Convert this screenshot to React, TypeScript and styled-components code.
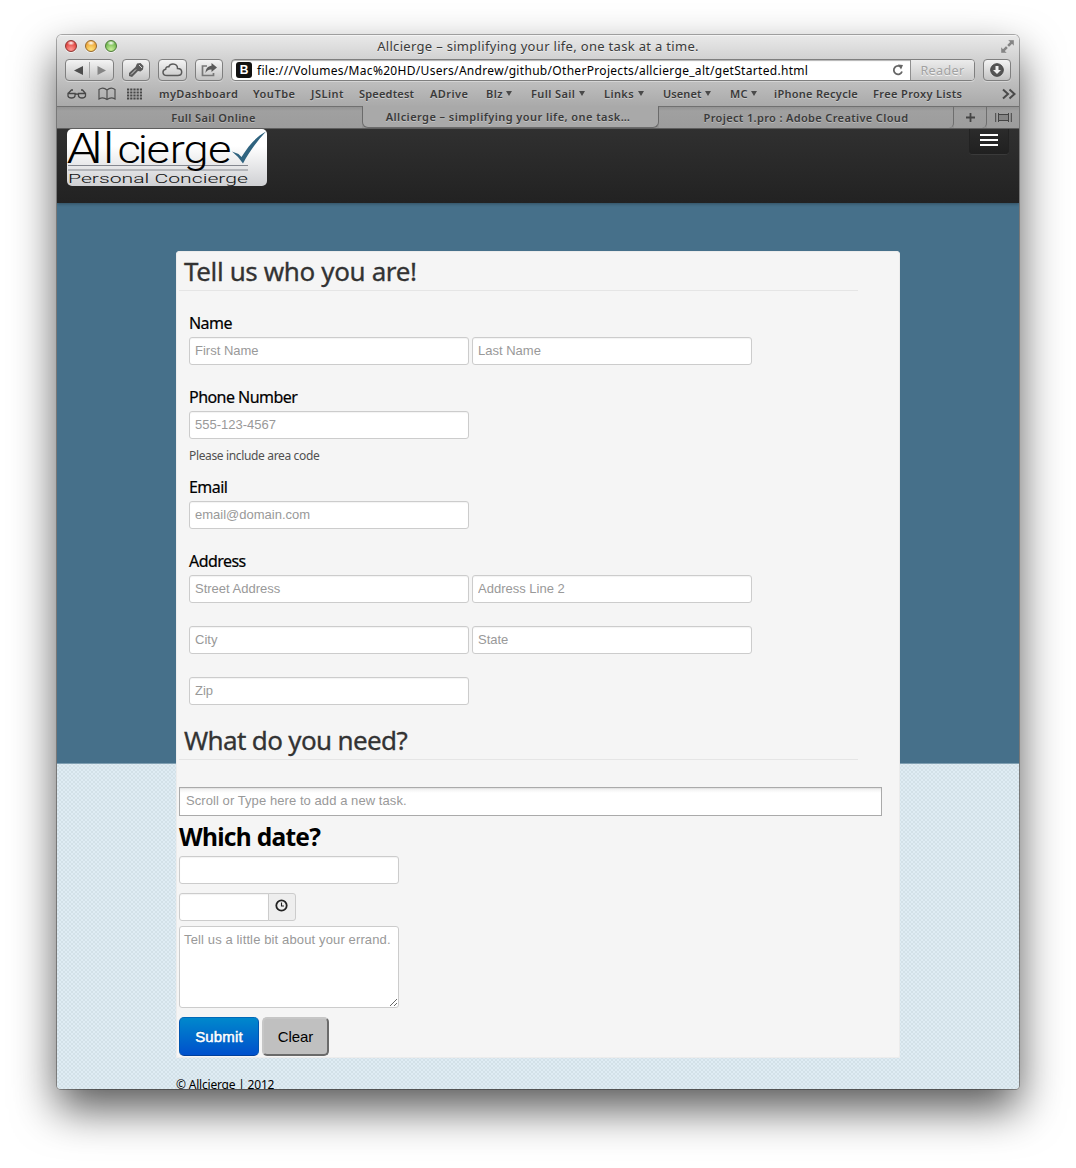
import React from "react";
import styled, { createGlobalStyle, css } from "styled-components";

const Global = createGlobalStyle`
  *, *::before, *::after { box-sizing: border-box; }
  body { margin: 0; background: #fff; }
`;

const chromeFont = `"Noto Sans", "Open Sans", sans-serif`;
const pageFont = `"Noto Sans", "Open Sans", sans-serif`;
const inputFont = `"Liberation Sans", Arial, sans-serif`;

const Desktop = styled.div`
  width: 1076px;
  height: 1168px;
  padding: 35px 57px 0 57px;
  overflow: hidden;
  background: #fff;
`;

const Window = styled.div`
  width: 962px;
  height: 1054px;
  border-radius: 5px 5px 4px 4px;
  box-shadow: 0 0 0 1px rgba(0, 0, 0, 0.3), 0 20px 44px rgba(0, 0, 0, 0.66);
  display: flex;
  flex-direction: column;
  overflow: hidden;
`;

const Chrome = styled.header`
  height: 94px;
  flex: none;
  background: linear-gradient(#e9e9e9, #d2d2d2 24px, #b3b3b3 60px, #a9a9a9 72px);
  box-shadow: inset 0 1px 0 #f4f4f4;
  font-family: ${chromeFont};
  color: #3a3a3a;
`;

const TitleBar = styled.div`
  height: 23px;
  display: grid;
  grid-template-columns: 80px 1fr 80px;
  align-items: center;
`;

const Lights = styled.div`
  display: flex;
  gap: 8px;
  padding: 0 0 1px 8px;
`;

const Light = styled.span<{ $hi: string; $mid: string; $edge: string }>`
  width: 12px;
  height: 12px;
  border-radius: 50%;
  border: 1px solid ${(p) => p.$edge};
  background: radial-gradient(ellipse 4px 2.5px at 50% 20%, #fff, transparent),
    radial-gradient(circle at 50% 85%, ${(p) => p.$hi}, ${(p) => p.$mid} 70%);
  box-shadow: 0 1px 0 rgba(255, 255, 255, 0.6);
`;

const Title = styled.div`
  text-align: center;
  font-size: 13px;
  letter-spacing: 0.31px;
  line-height: 21px;
  margin-top: -1px;
  white-space: nowrap;
  text-shadow: 0 1px 0 rgba(255, 255, 255, 0.5);
`;

const FullScreen = styled.div`
  display: flex;
  justify-content: flex-end;
  padding-right: 4px;
`;

const Toolbar = styled.div`
  height: 24px;
  display: flex;
  align-items: center;
  padding: 0 8px;
`;

const control = css`
  height: 22px;
  flex: none;
  border: 1px solid #7f7f7f;
  border-radius: 4px;
  background: linear-gradient(#f4f4f4, #c3c3c3);
  box-shadow: 0 1px 0 rgba(255, 255, 255, 0.35);
  display: flex;
  align-items: center;
  justify-content: center;
`;

const ToolButton = styled.div<{ $w: number; $gap: number }>`
  ${control}
  width: ${(p) => p.$w}px;
  margin-right: ${(p) => p.$gap}px;
`;

const AddressField = styled.div`
  ${control}
  width: 744px;
  margin-right: 8px;
  background: #fff;
  justify-content: flex-start;
  overflow: hidden;
  box-shadow: inset 0 1px 1px rgba(0, 0, 0, 0.3), 0 1px 0 rgba(255, 255, 255, 0.35);
`;

const Favicon = styled.span`
  width: 16px;
  height: 16px;
  margin: 0 5px 0 4px;
  border-radius: 3px;
  background: #111;
  color: #fff;
  font: bold 12px/16px ${inputFont};
  text-align: center;
`;

const Url = styled.span`
  width: 635px;
  color: #000;
  font-size: 12px;
  line-height: 20px;
  letter-spacing: 0.31px;
  white-space: nowrap;
  padding-top: 1px;
`;

const Reader = styled.span`
  flex: 1;
  height: 20px;
  margin-left: 6px;
  border-left: 1px solid #8f8f8f;
  background: linear-gradient(#ececec, #c9c9c9);
  color: #a2a2a2;
  font-size: 12.5px;
  line-height: 21px;
  letter-spacing: 0.4px;
  text-align: center;
  text-shadow: 0 1px 0 #f2f2f2;
`;

const Bookmarks = styled.div`
  height: 24px;
  display: flex;
  align-items: center;
  padding-left: 10px;
`;

const BookmarkIcons = styled.div`
  width: 92px;
  display: flex;
  align-items: center;
  gap: 11px;
`;

const Bookmark = styled.div<{ $w: number; $ls: number }>`
  width: ${(p) => p.$w}px;
  display: flex;
  align-items: center;
  font-size: 11px;
  font-weight: 600;
  letter-spacing: ${(p) => p.$ls}px;
  line-height: 20px;
  white-space: nowrap;
  text-shadow: 0 1px 0 rgba(255, 255, 255, 0.35);
`;

const Caret = styled.i`
  margin: -2px 0 0 3.5px;
  border: 3.5px solid transparent;
  border-top: 5px solid #4a4a4a;
  border-bottom: 0;
`;

const Tabs = styled.div`
  height: 23px;
  display: flex;
  background: #949494;
  border-bottom: 1px solid #5e5e5e;
`;

const Tab = styled.div<{ $w: number; $active?: boolean; $pad?: number; $ls?: number }>`
  width: ${(p) => p.$w}px;
  height: 22px;
  padding-left: ${(p) => p.$pad || 0}px;
  font-size: 11px;
  font-weight: 600;
  letter-spacing: ${(p) => p.$ls || 0}px;
  line-height: 20px;
  white-space: nowrap;
  display: flex;
  justify-content: center;
  align-items: center;
  text-shadow: 0 1px 0 rgba(255, 255, 255, 0.3);
  ${(p) =>
    p.$active
      ? css`
          padding: 1px 5px 0 0;
          border: solid #6b6b6b;
          border-width: 0 1px 1px;
          border-radius: 0 0 6px 6px;
          background: #a9a9a9;
        `
      : css`
          border-top: 1px solid #707070;
          background: linear-gradient(#939393, #a0a0a0 4px, #9c9c9c);
        `}
`;

const SmallTab = styled(Tab)`
  border-right: 1px solid #6e6e6e;
  border-radius: 0 0 5px 0;
`;

const Page = styled.main`
  flex: 1;
  min-height: 0;
  overflow: hidden;
  font-family: ${pageFont};
  color: #000;
  background: conic-gradient(#dfecf4 25%, #d3e1e8 0 50%, #dfecf4 0 75%, #d3e1e8 0) 0 0 / 4px 4px;
`;

const Band = styled.div`
  height: 635px;
  background: #46708a;
  border-bottom: 1px solid #7f9fb2;
`;

const Navbar = styled.nav`
  height: 74px;
  padding: 0 10px;
  display: flex;
  justify-content: space-between;
  background: linear-gradient(#303030, #222);
  box-shadow: 0 1px 3px rgba(0, 0, 0, 0.3);
`;

const MenuButton = styled.div`
  width: 40px;
  height: 25px;
  padding: 5px 0 0 11px;
  display: flex;
  flex-direction: column;
  gap: 3px;
  border-radius: 0 0 4px 4px;
  background: linear-gradient(#2b2b2b, #202020);
  box-shadow: 0 1px 0 #3a3a3a, inset 1px 0 0 #222, inset -1px 0 0 #222;
`;

const Bar = styled.span`
  width: 18px;
  height: 2px;
  background: #fff;
`;

const Sheet = styled.section`
  width: 724px;
  height: 807px;
  margin: -513px 0 0 119px;
  padding: 0 3px;
  background: #f5f5f5;
  border-radius: 4px 4px 2px 2px;
  box-shadow: inset 0 0 0 1px #ececec;
`;

const Legend = styled.h2<{ $mb: number; $ls: number }>`
  width: 679px;
  height: 40px;
  margin: 0 0 ${(p) => p.$mb}px;
  padding-left: 5px;
  border-bottom: 1px solid #e5e5e5;
  color: #333;
  font-size: 26px;
  font-weight: 400;
  letter-spacing: ${(p) => p.$ls}px;
  line-height: 40px;
  -webkit-text-stroke: 0.3px #333;
`;

const Fields = styled.div`
  height: 411px;
  padding-left: 10px;
  display: flex;
  flex-direction: column;
`;

const Group = styled.div<{ $h: number }>`
  height: ${(p) => p.$h}px;
`;

const Label = styled.label`
  display: block;
  height: 28px;
  font-size: 16px;
  letter-spacing: -0.55px;
  line-height: 28px;
  -webkit-text-stroke: 0.2px #000;
`;

const Row = styled.div`
  display: flex;
  gap: 3px;
`;

const Input = styled.input<{ $w?: number }>`
  width: ${(p) => p.$w || 280}px;
  height: 28px;
  padding: 0 5px 2px;
  border: 1px solid #ccc;
  border-radius: 3px;
  outline: 0;
  background: #fff;
  box-shadow: inset 0 1px 1px rgba(0, 0, 0, 0.05);
  font: 13px/18px ${inputFont};
  &::placeholder { color: #999; opacity: 1; }
`;

const Help = styled.p`
  margin: 0;
  color: #505050;
  font-size: 12px;
  letter-spacing: -0.35px;
  line-height: 33px;
`;

const TaskInput = styled(Input)`
  display: block;
  width: 703px;
  height: 29px;
  padding: 0 6px 2px;
  border: 1px solid #aaa;
  border-radius: 0;
  background: linear-gradient(#eee, #fff 5px);
  letter-spacing: 0.07px;
`;

const DateHeading = styled.h3`
  height: 40px;
  margin: 0;
  font-size: 24.5px;
  letter-spacing: -0.7px;
  line-height: 42px;
`;

const TimeGroup = styled.div`
  display: flex;
  margin: 9px 0 5px;
`;

const TimeInput = styled(Input)`
  border-radius: 3px 0 0 3px;
`;

const AddOn = styled.span`
  display: flex;
  align-items: flex-start;
  justify-content: center;
  width: 28px;
  height: 28px;
  margin-left: -1px;
  padding: 5px 2px 0 0;
  border: 1px solid #ccc;
  border-radius: 0 3px 3px 0;
  background: #eee;
`;

const Errand = styled.textarea`
  display: block;
  width: 220px;
  height: 82px;
  margin-bottom: 9px;
  padding: 4px;
  border: 1px solid #ccc;
  border-radius: 3px;
  resize: both;
  overflow: hidden;
  font: 13px/18px ${inputFont};
  letter-spacing: 0.13px;
  &::placeholder { color: #999; opacity: 1; }
`;

const Button = styled.button<{ $primary?: boolean }>`
  height: 39px;
  padding: 0;
  border-radius: 5px;
  font: 15px/20px ${inputFont};
  ${(p) =>
    p.$primary
      ? css`
          width: 80px;
          border: 1px solid;
          border-color: #0069b8 #0055b0 #003f9a;
          background: linear-gradient(#0088cc, #0050cc);
          color: #fff;
          letter-spacing: 0.15px;
          -webkit-text-stroke: 0.5px #fff;
          text-shadow: 0 -1px 0 rgba(0, 0, 0, 0.25);
        `
      : css`
          width: 67px;
          border: 2px solid;
          border-color: #c6c6c6 #6a6a6a #6a6a6a #c6c6c6;
          background: #c0c0c0;
          color: #000;
          letter-spacing: -0.1px;
        `}
`;

const Footer = styled.footer`
  padding: 17px 0 0 119px;
  font-size: 12px;
  letter-spacing: -0.2px;
  line-height: 20px;
`;

const Logo = () => (
  <svg width="200" height="57" viewBox="0 1 200 57">
    <defs>
      <linearGradient id="plate" x1="0" y1="0" x2="0" y2="1">
        <stop offset="0.3" stopColor="#fff" />
        <stop offset="1" stopColor="#cfd0d3" />
      </linearGradient>
    </defs>
    <rect width="200" height="57" y="1" rx="5" fill="url(#plate)" />
    <path d="M1 37.500h180" stroke="#84878f" strokeWidth="1" />
    <path d="M1 42h180" stroke="#b4b6ba" strokeWidth="2" />
    <g transform="scale(1.16 1)" fontFamily="Roboto, sans-serif" fontWeight="300">
      <text y="35">
        <tspan fontSize="43" x="-0.2 21 31">All</tspan>
        <tspan fontSize="39" x="43.500 61 68.500 88.500 100.500 121.500">cierge</tspan>
      </text>
    </g>
    <text x="1" y="54.5" fontFamily="Roboto, sans-serif" fontWeight="300" fontSize="13" textLength="180" lengthAdjust="spacingAndGlyphs" fill="#111">Personal Concierge</text>
    <path d="M165 23.500l6.500 2.500 3 3C182 17 189 9 199 3.500 190 13 182 24 176 35.500Q172 29 165 23.500z" fill="#2f637f" />
  </svg>
);

const bookmarks: [string, number, number, boolean?][] = [
  ["myDashboard", 94, 0.38],
  ["YouTbe", 58, 0.5],
  ["JSLint", 48, 0.5],
  ["Speedtest", 71, 0.2],
  ["ADrive", 56, 0.42],
  ["Blz", 45, 0.4, true],
  ["Full Sail", 73, 0.4, true],
  ["Links", 59, 0.4, true],
  ["Usenet", 67, 0.1, true],
  ["MC", 44, 0.3, true],
  ["iPhone Recycle", 99, 0.28],
  ["Free Proxy Lists", 129, 0.36],
];

export default function App() {
  return (
    <Desktop>
      <Global />
      <Window>
        <Chrome>
          <TitleBar>
            <Lights>
              <Light $hi="#ff9a94" $mid="#e0433f" $edge="#8e3330" />
              <Light $hi="#ffe37a" $mid="#eda63a" $edge="#96682a" />
              <Light $hi="#c9f09b" $mid="#71b84f" $edge="#4d7a38" />
            </Lights>
            <Title>Allcierge – simplifying your life, one task at a time.</Title>
            <FullScreen>
              <svg width="15" height="15" viewBox="0 0 15 15" fill="#858585">
                <path d="M8 1h6v6l-2-2-3 3-2-2 3-3zM1 8l2 2 3-3 2 2-3 3 2 2H1z" stroke="#ddd" strokeWidth="0.4" />
              </svg>
            </FullScreen>
          </TitleBar>
          <Toolbar>
            <ToolButton $w={49} $gap={8}>
              <svg width="47" height="20" viewBox="0 0 47 20">
                <path d="M8 10.500l9-4.500v9z" fill="#4d4d4d" />
                <path d="M40 10.500l-8.500-4.500v9z" fill="#858585" />
                <path d="M23.500 2v16" stroke="#a5a5a5" />
              </svg>
            </ToolButton>
            <ToolButton $w={28} $gap={8}>
              <svg width="18" height="18" viewBox="0 0 18 18">
                <path d="M10 2.500l3.500-.5 3 3-.5 3.500-2.500 2-2.500-.5L5 16 2 15v-3l6.500-6z" fill="#5a5a5a" />
                <path d="M12 4l3 3M4 13.500l5-5" stroke="#d5d5d5" strokeWidth="1" />
              </svg>
            </ToolButton>
            <ToolButton $w={29} $gap={8}>
              <svg width="21" height="16" viewBox="0 0 21 16" fill="none" stroke="#5a5a5a" strokeWidth="1.500">
                <path d="M5 13.500C2.500 13.500 1 12 1 10.200 1 8.500 2 7.500 3.700 7.200 3.700 5.200 5 4.300 6.800 4.800 7.500 2.800 9 2 11 2c3 0 4.700 2 4.500 4.500 2.500 0 4.200 1.400 4.200 3.500s-1.500 3.500-4 3.500z" />
              </svg>
            </ToolButton>
            <ToolButton $w={28} $gap={8}>
              <svg width="18" height="16" viewBox="0 0 18 16">
                <path d="M7 4H2.500v9.500h11V11" fill="none" stroke="#777" strokeWidth="1.700" />
                <path d="M11.500 1l5.500 4.500-5.500 4.500V7.500C8.500 7.300 6.800 8.500 5.500 11 5.700 6.500 8 4 11.500 3.700z" fill="#5a5a5a" />
              </svg>
            </ToolButton>
            <AddressField>
              <Favicon>B</Favicon>
              <Url>file:///Volumes/Mac%20HD/Users/Andrew/github/OtherProjects/allcierge_alt/getStarted.html</Url>
              <svg width="12" height="14" viewBox="0 0 12 14">
                <path d="M9.300 4.500A4.200 4.200 0 1 0 10 8.500" fill="none" stroke="#666" strokeWidth="1.800" />
                <path d="M6 1.500l5 .5-2 4.500z" fill="#666" />
              </svg>
              <Reader>Reader</Reader>
            </AddressField>
            <ToolButton $w={28} $gap={0}>
              <svg width="16" height="16" viewBox="0 0 16 16">
                <circle cx="8" cy="8" r="6.300" fill="#555" stroke="#444" />
                <path d="M6.500 4h3v4H12l-4 4-4-4h2.500z" fill="#f0f0f0" />
              </svg>
            </ToolButton>
          </Toolbar>
          <Bookmarks>
            <BookmarkIcons>
              <svg width="20" height="12" viewBox="0 0 20 12" fill="none" stroke="#484848" strokeWidth="1.300">
                <path d="M1 5.500h7v2.500q-.5 2-3.500 2T1 8zM11.500 5.500h7v2.500q-.5 2-3.500 2T11.500 8zM8 6.500q1.700-1 3.500 0M1 5.500L4.500 2H6M18.500 5.500L15.500 2H14" />
              </svg>
              <svg width="18" height="14" viewBox="0 0 18 14" fill="none" stroke="#4d4d4d" strokeWidth="1.200">
                <path d="M9 3Q5-.500 1 2.500V12q4-2.500 8 .500 4-3 8-.500V2.500Q13-.500 9 3zV12.500" />
              </svg>
              <svg width="17" height="12" viewBox="0 0 17 12" stroke="#484848" strokeWidth="2" strokeDasharray="2.200 1">
                <path d="M0 1.500h16M0 4.500h16M0 7.500h16M0 10.500h16" />
              </svg>
            </BookmarkIcons>
            {bookmarks.map(([name, w, ls, menu]) => (
              <Bookmark key={name} $w={w} $ls={ls}>
                {name}
                {menu && <Caret />}
              </Bookmark>
            ))}
            <svg width="14" height="12" viewBox="0 0 14 12" fill="none" stroke="#4a4a4a" strokeWidth="2">
              <path d="M1 1.500L6 6l-5 4.500M7.500 1.500l5 4.500-5 4.500" />
            </svg>
          </Bookmarks>
          <Tabs>
            <Tab $w={305} $pad={8} $ls={0.35}>Full Sail Online</Tab>
            <Tab $w={297} $active $ls={0.44}>Allcierge – simplifying your life, one task…</Tab>
            <SmallTab $w={295} $ls={0.35}>Project 1.pro : Adobe Creative Cloud</SmallTab>
            <SmallTab $w={33}>
              <svg width="9" height="9" viewBox="0 0 9 9" stroke="#444" strokeWidth="1.800">
                <path d="M4.500 0v9M0 4.500h9" />
              </svg>
            </SmallTab>
            <Tab $w={32}>
              <svg width="17" height="9" viewBox="0 0 17 9" fill="none" stroke="#444">
                <rect x="3.500" y="1.500" width="10" height="6" fill="#858585" />
                <path d="M.7 0v9M16.300 0v9M3.500 0v9M13.500 0v9" />
              </svg>
            </Tab>
          </Tabs>
        </Chrome>
        <Page>
          <Band>
            <Navbar>
              <Logo />
              <MenuButton>
                <Bar />
                <Bar />
                <Bar />
              </MenuButton>
            </Navbar>
          </Band>
          <Sheet>
            <Legend $mb={18} $ls={-0.37}>Tell us who you are!</Legend>
            <Fields>
              <Group $h={74}>
                <Label>Name</Label>
                <Row>
                  <Input placeholder="First Name" />
                  <Input placeholder="Last Name" />
                </Row>
              </Group>
              <Group $h={90}>
                <Label>Phone Number</Label>
                <Input placeholder="555-123-4567" />
                <Help>Please include area code</Help>
              </Group>
              <Group $h={74}>
                <Label>Email</Label>
                <Input placeholder="email@domain.com" />
              </Group>
              <Group $h={79}>
                <Label>Address</Label>
                <Row>
                  <Input placeholder="Street Address" />
                  <Input placeholder="Address Line 2" />
                </Row>
              </Group>
              <Group $h={51}>
                <Row>
                  <Input placeholder="City" />
                  <Input placeholder="State" />
                </Row>
              </Group>
              <Input placeholder="Zip" />
            </Fields>
            <Legend $mb={27} $ls={-0.64}>What do you need?</Legend>
            <TaskInput placeholder="Scroll or Type here to add a new task." />
            <DateHeading>Which date?</DateHeading>
            <Row>
              <Input $w={220} />
            </Row>
            <TimeGroup>
              <TimeInput $w={90} />
              <AddOn>
                <svg width="13" height="13" viewBox="0 0 13 13" fill="none" stroke="#222">
                  <circle cx="6.500" cy="6.500" r="5.200" strokeWidth="1.800" />
                  <path d="M6.500 3.500V7H9" strokeWidth="1.100" />
                </svg>
              </AddOn>
            </TimeGroup>
            <Errand placeholder="Tell us a little bit about your errand." />
            <Row>
              <Button $primary>Submit</Button>
              <Button>Clear</Button>
            </Row>
          </Sheet>
          <Footer>© Allcierge | 2012</Footer>
        </Page>
      </Window>
    </Desktop>
  );
}
